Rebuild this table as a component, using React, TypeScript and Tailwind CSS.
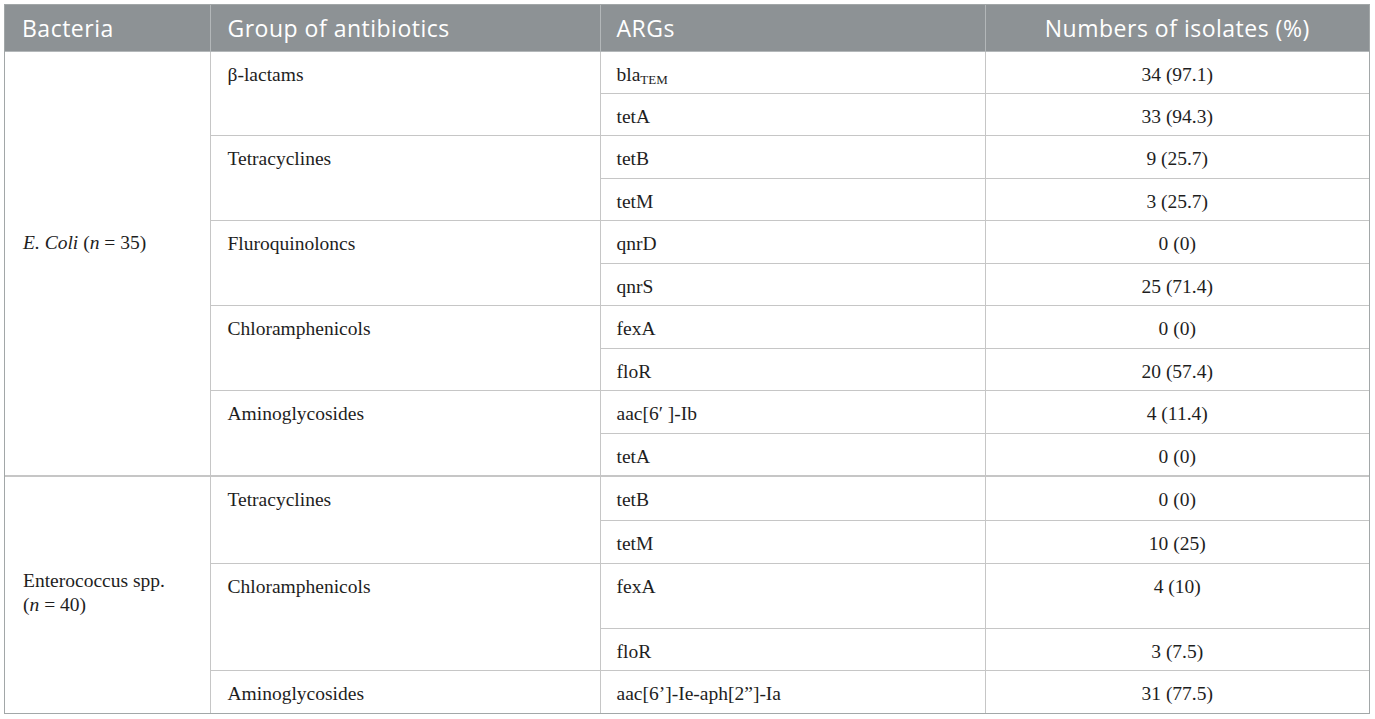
import type { ReactNode } from "react";

type Arg = { gene: ReactNode; count: string; h: string };
type Group = { name: string; args: Arg[] };
type Section = { bacteria: ReactNode; pad: string; groups: Group[] };

const sections: Section[] = [
  {
    bacteria: (
      <>
        <i>E. Coli</i> (<i>n</i> = 35)
      </>
    ),
    pad: "pb-[40px]",
    groups: [
      {
        name: "β-lactams",
        args: [
          { gene: <>bla<sub className="text-[13px]">TEM</sub></>, count: "34 (97.1)", h: "h-[42px]" },
          { gene: "tetA", count: "33 (94.3)", h: "h-[42px]" },
        ],
      },
      {
        name: "Tetracyclines",
        args: [
          { gene: "tetB", count: "9 (25.7)", h: "h-[43px]" },
          { gene: "tetM", count: "3 (25.7)", h: "h-[42px]" },
        ],
      },
      {
        name: "Fluroquinoloncs",
        args: [
          { gene: "qnrD", count: "0 (0)", h: "h-[43px]" },
          { gene: "qnrS", count: "25 (71.4)", h: "h-[42px]" },
        ],
      },
      {
        name: "Chloramphenicols",
        args: [
          { gene: "fexA", count: "0 (0)", h: "h-[43px]" },
          { gene: "floR", count: "20 (57.4)", h: "h-[42px]" },
        ],
      },
      {
        name: "Aminoglycosides",
        args: [
          { gene: "aac[6′ ]-Ib", count: "4 (11.4)", h: "h-[43px]" },
          { gene: "tetA", count: "0 (0)", h: "h-[43px]" },
        ],
      },
    ],
  },
  {
    bacteria: (
      <>
        Enterococcus spp.
        <br />(<i>n</i> = 40)
      </>
    ),
    pad: "pb-[4px]",
    groups: [
      {
        name: "Tetracyclines",
        args: [
          { gene: "tetB", count: "0 (0)", h: "h-[44px]" },
          { gene: "tetM", count: "10 (25)", h: "h-[43px]" },
        ],
      },
      {
        name: "Chloramphenicols",
        args: [
          { gene: "fexA", count: "4 (10)", h: "h-[65px]" },
          { gene: "floR", count: "3 (7.5)", h: "h-[42px]" },
        ],
      },
      {
        name: "Aminoglycosides",
        args: [{ gene: "aac[6’]-Ie-aph[2”]-Ia", count: "31 (77.5)", h: "h-[43px]" }],
      },
    ],
  },
];

const cell = "border border-[#c6c6c6] align-top pt-[12px] leading-[22px]";

export default function App() {
  return (
    <div className="bg-white min-h-screen p-1 text-[#1e1e1e]">
      <div className="w-[1366px] border border-[#a2a7a8]">
        <table className="w-full table-fixed border-collapse border-hidden font-['Liberation_Serif',serif] text-[19.5px]">
          <colgroup>
            <col className="w-[205px]" />
            <col className="w-[390px]" />
            <col className="w-[385px]" />
            <col />
          </colgroup>
          <thead>
            <tr className="h-[46px] bg-[#8d9295] text-white font-['Open_Sans',sans-serif] text-[23px] tracking-[0.5px]">
              <th className="border border-[#b3b7b9] text-left font-normal pl-[17px]">Bacteria</th>
              <th className="border border-[#b3b7b9] text-left font-normal pl-[17px]">Group of antibiotics</th>
              <th className="border border-[#b3b7b9] text-left font-normal pl-[16px]">ARGs</th>
              <th className="border border-[#b3b7b9] text-center font-normal">Numbers of isolates (%)</th>
            </tr>
          </thead>
          {sections.map((s, si) => {
            const total = s.groups.reduce((n, g) => n + g.args.length, 0);
            const edge = si > 0 ? "border-t-2" : "";
            return (
              <tbody key={si}>
                {s.groups.map((g, gi) =>
                  g.args.map((a, ai) => {
                    const first = gi === 0 && ai === 0;
                    const top = first ? edge : "";
                    return (
                      <tr key={`${gi}-${ai}`} className={a.h}>
                        {first && (
                          <td
                            rowSpan={total}
                            className={`border border-[#c6c6c6] align-middle pl-[18px] leading-[24px] ${s.pad} ${edge}`}
                          >
                            {s.bacteria}
                          </td>
                        )}
                        {ai === 0 && (
                          <td rowSpan={g.args.length} className={`${cell} pl-[17px] ${top}`}>
                            {g.name}
                          </td>
                        )}
                        <td className={`${cell} pl-[16px] ${top}`}>{a.gene}</td>
                        <td className={`${cell} text-center ${top}`}>{a.count}</td>
                      </tr>
                    );
                  })
                )}
              </tbody>
            );
          })}
        </table>
      </div>
    </div>
  );
}
